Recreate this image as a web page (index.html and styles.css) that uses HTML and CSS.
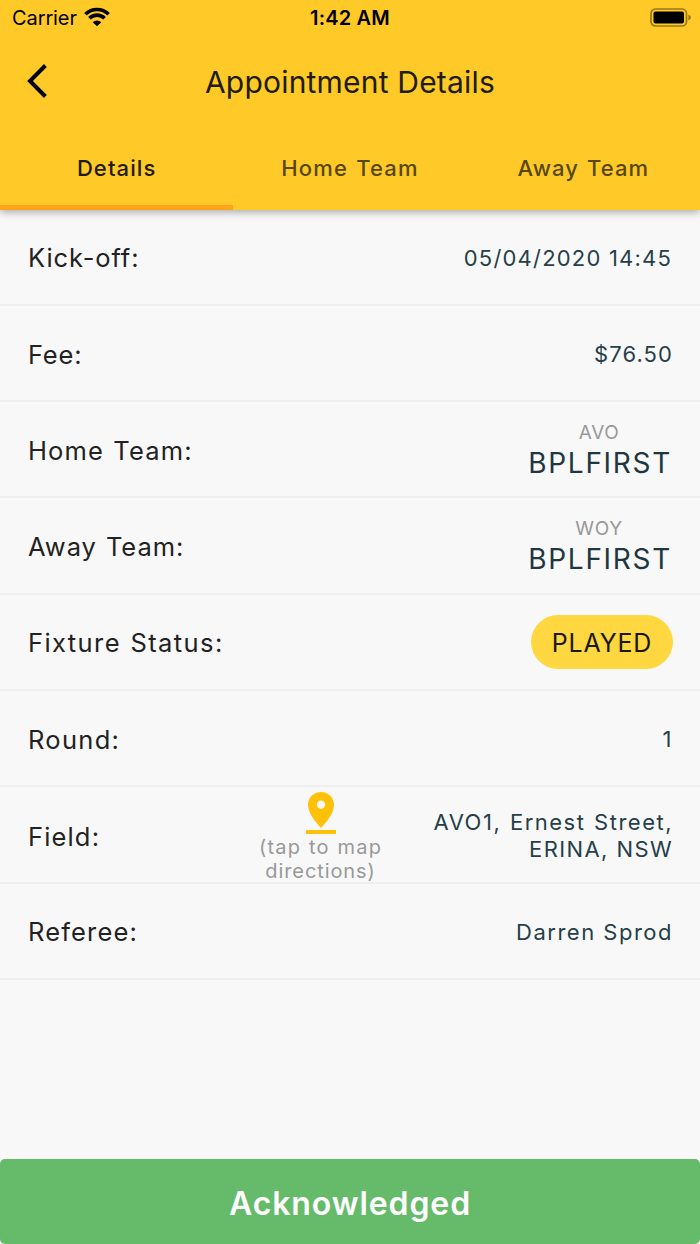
FILE: index.html
```html
<!DOCTYPE html>
<html lang="en">
<head>
<meta charset="utf-8">
<title>Appointment Details</title>
<link rel="stylesheet" href="styles.css">
</head>
<body>
<div class="screen">
  <header class="header">
    <div class="status">
      <div class="carrier"><span>Carrier</span>
        <svg class="wifi" viewBox="0 0 26 20" width="26" height="20"><g fill="none" stroke="#000" stroke-width="3.6"><path d="M1.4 7.2A16.5 16.5 0 0 1 24.6 7.2"/><path d="M5.4 11.3A10.8 10.8 0 0 1 20.6 11.3"/></g><path d="M8.7 15.2A6.2 6.2 0 0 1 17.3 15.2L13 19.3Z" fill="#000"/></svg>
      </div>
      <span class="clock">1:42 AM</span>
      <svg class="battery" viewBox="0 0 42 20" width="42" height="20"><rect x="1" y="1" width="35.5" height="17" rx="4.5" fill="none" stroke="#99781a" stroke-width="1.7"/><rect x="3.5" y="3.5" width="30.5" height="12" rx="2" fill="#000"/><path d="M38.3 6.6Q41 7.4 41 9.6T38.3 12.5Z" fill="#99781a"/></svg>
    </div>
    <div class="nav">
      <svg class="back" viewBox="0 0 22 34" width="22" height="34"><path d="M19.4 1.5L4 17L19.4 32.5" fill="none" stroke="#000" stroke-width="4"/></svg>
      <h1 class="title">Appointment Details</h1>
    </div>
    <nav class="tabs">
      <div class="tab active"><span class="t-details">Details</span></div>
      <div class="tab"><span class="t-home">Home Team</span></div>
      <div class="tab"><span class="t-away">Away Team</span></div>
    </nav>
  </header>
  <main class="list">
    <div class="row"><span class="label l-kick">Kick-off:</span><span class="value v-date">05/04/2020 14:45</span></div>
    <div class="row"><span class="label l-fee">Fee:</span><span class="value v-fee">$76.50</span></div>
    <div class="row"><span class="label l-home">Home Team:</span><div class="team"><span class="club">AVO</span><span class="side">BPLFIRST</span></div></div>
    <div class="row"><span class="label l-away">Away Team:</span><div class="team away"><span class="club">WOY</span><span class="side">BPLFIRST</span></div></div>
    <div class="row"><span class="label l-fixture">Fixture Status:</span><span class="chip">PLAYED</span></div>
    <div class="row"><span class="label l-round">Round:</span><span class="value v-round">1</span></div>
    <div class="row field"><span class="label l-field">Field:</span>
      <div class="map">
        <svg viewBox="0 0 30 42" width="30" height="42"><path fill="#ffc107" fill-rule="evenodd" d="M15 0C7.700 0 2 5.600 2 12.800C2 21 9 29.500 15 36C21 29.500 28 21 28 12.800C28 5.600 22.300 0 15 0ZM15 8.400A4.200 4.200 0 1 1 15 16.800A4.200 4.200 0 1 1 15 8.400Z"/><rect y="38" width="30" height="4" fill="#ffc107"/></svg>
        <span class="tap1">(tap to map</span><span class="tap2">directions)</span>
      </div>
      <div class="address"><span class="a1">AVO1, Ernest Street,</span><span class="a2">ERINA, NSW</span></div>
    </div>
    <div class="row"><span class="label l-ref">Referee:</span><span class="value v-ref">Darren Sprod</span></div>
  </main>
  <button class="ack"><span>Acknowledged</span></button>
</div>
</body>
</html>
```
FILE: styles.css
```css
* { box-sizing: border-box; }
body { margin: 0; background: #f8f8f8; font-family: Inter, "Liberation Sans", sans-serif; }
.screen { width: 700px; height: 1244px; display: flex; flex-direction: column; background: #f8f8f8; white-space: nowrap; }
.header { height: 209.6px; flex: none; background: #ffca28; box-shadow: 0 2px 8px rgba(0,0,0,.34); z-index: 1; }
.status { height: 36px; display: grid; grid-template-columns: 1fr auto 1fr; align-items: center; padding: 0 12px; font-size: 20px; color: #000; }
.carrier { display: flex; align-items: center; gap: 7px; letter-spacing: -.1px; }
.wifi { margin-bottom: 2px; }
.clock { font-weight: 600; letter-spacing: .2px; }
.battery { justify-self: end; margin: 0 -4px 1px 0; }
.nav { height: 92px; display: grid; grid-template-columns: 60px 1fr 60px; align-items: center; }
.back { margin: 0 0 2px 26px; }
.title { margin: 0; text-align: center; font-size: 30px; line-height: 36px; font-weight: 400; letter-spacing: .2px; color: #211c09; }
.tabs { height: 81.6px; display: grid; grid-template-columns: repeat(3, 1fr); }
.tab { display: flex; justify-content: center; align-items: center; padding-bottom: 2px; font-size: 22px; font-weight: 500; color: #58470f; letter-spacing: 1.2px; word-spacing: 1px; }
.tab.active { color: #211c09; letter-spacing: 1.1px; border-bottom: 5px solid #ffa31a; padding: 3px 0 0; }
.t-away { letter-spacing: 1.1px; }
.list { flex: 1; }
.row { height: 96.3px; display: flex; align-items: center; justify-content: space-between; padding: 2px 28px 0; border-bottom: 2px solid #eee; }
.label { font-size: 25.5px; color: #222; letter-spacing: 1.15px; word-spacing: 1px; }
.l-kick { letter-spacing: .9px; }
.l-fee { letter-spacing: .8px; }
.l-away { letter-spacing: .95px; }
.l-fixture { letter-spacing: 1.4px; }
.l-round { letter-spacing: 1.3px; }
.value, .address { font-size: 22px; color: #263f49; letter-spacing: 1.5px; margin-right: -1px; }
.v-date { letter-spacing: 1.2px; margin-right: 0; }
.v-fee { letter-spacing: 1.1px; }
.team { display: flex; flex-direction: column; align-items: center; padding-top: 2px; }
.club { font-size: 19px; line-height: 24px; color: #999; letter-spacing: .7px; margin-right: 2px; }
.side { font-size: 28px; line-height: 36px; color: #203640; letter-spacing: 1.7px; }
.team.away { padding: 0; }
.chip { width: 142px; height: 54px; margin: 0 -1px 2px 0; padding-top: 2px; border-radius: 27px; background: #ffd740; font-size: 25px; letter-spacing: .8px; color: #1b1707; display: flex; align-items: center; justify-content: center; }
.field { display: grid; grid-template-columns: 207px 171px 1fr; }
.map { display: flex; flex-direction: column; align-items: center; padding-top: 3px; font-size: 20px; line-height: 24px; color: #999; letter-spacing: .9px; }
.map svg { margin-bottom: 1px; }
.tap1 { letter-spacing: 1.2px; word-spacing: 1px; }
.address { display: flex; flex-direction: column; align-items: flex-end; line-height: 27px; }
.a1 { word-spacing: 1px; }
.a2 { letter-spacing: 1.4px; }
.ack { height: 85px; flex: none; border: 0; border-radius: 5px; background: #66bb6a; color: #fff; font: 600 32px Inter, "Liberation Sans", sans-serif; letter-spacing: .9px; padding: 3px 0 0; }
```
